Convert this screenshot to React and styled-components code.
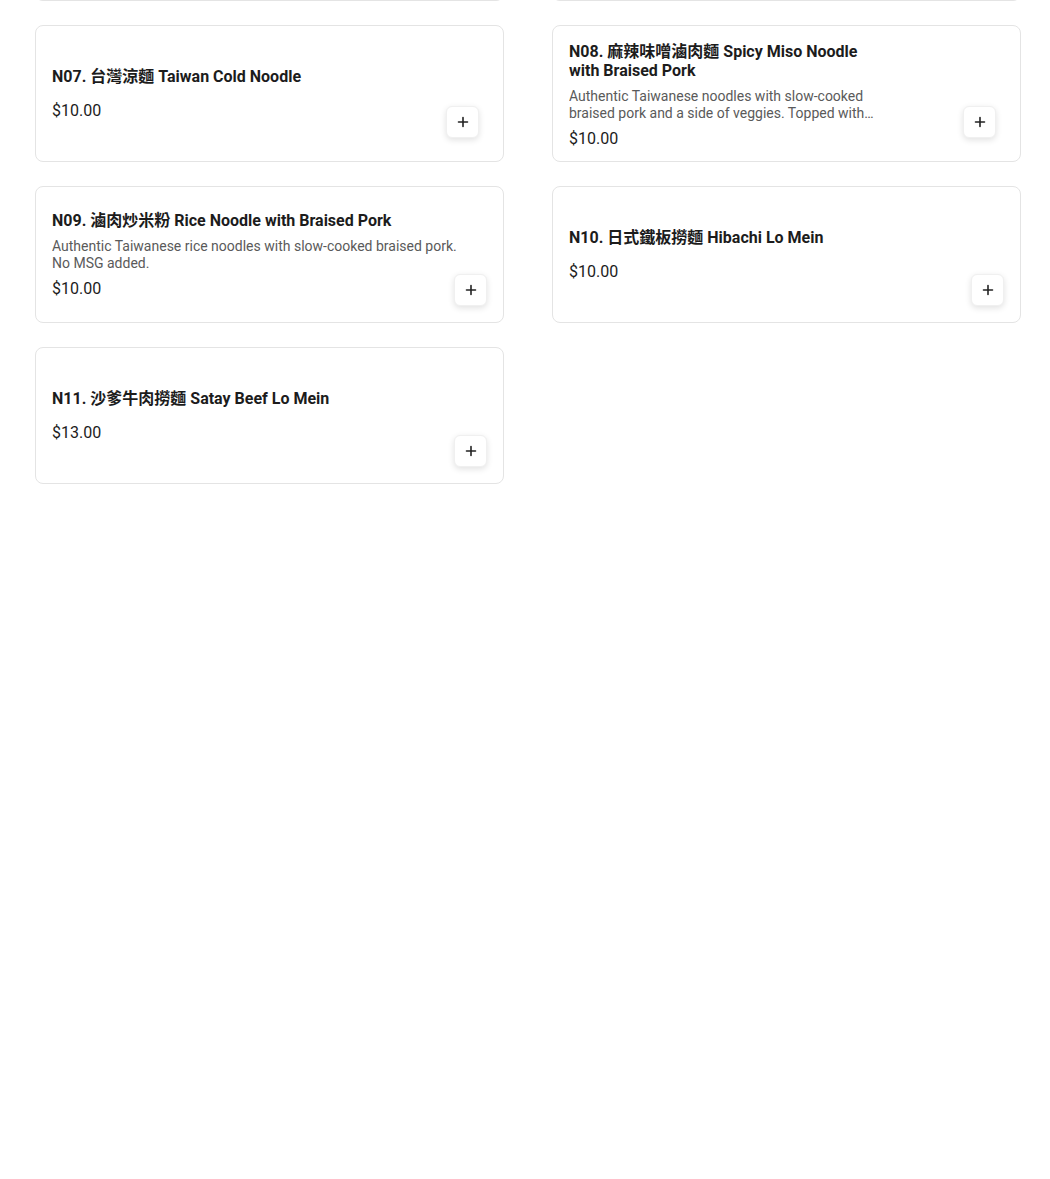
import React from 'react'
import styled, { createGlobalStyle } from 'styled-components'

const items = [
    { code: 'N07', zh: '台灣涼麵', en: 'Taiwan Cold Noodle', price: '$10.00', image: true },
    {
        code: 'N08',
        zh: '麻辣味噌滷肉麵',
        en: 'Spicy Miso Noodle with Braised Pork',
        desc: 'Authentic Taiwanese noodles with slow-cooked braised pork and a side of veggies. Topped with pickled mustard greens and scallions. No MSG added.',
        price: '$10.00',
        image: true,
    },
    {
        code: 'N09',
        zh: '滷肉炒米粉',
        en: 'Rice Noodle with Braised Pork',
        desc: 'Authentic Taiwanese rice noodles with slow-cooked braised pork. No MSG added.',
        price: '$10.00',
    },
    { code: 'N10', zh: '日式鐵板撈麵', en: 'Hibachi Lo Mein', price: '$10.00' },
    { code: 'N11', zh: '沙爹牛肉撈麵', en: 'Satay Beef Lo Mein', price: '$13.00' },
]

const PlusIcon = () => (
    <svg width="12" height="12" viewBox="0 0 12 12" fill="none">
        <path d="M6 1.5v9M1.5 6h9" stroke="#222" strokeWidth="1.6" strokeLinecap="round" />
    </svg>
)

function MenuCard({ item }) {
    return (
        <Card>
            <Info $image={item.image}>
                <Title>{item.code}. {item.zh} {item.en}</Title>
                {item.desc && <Desc>{item.desc}</Desc>}
                <Price>{item.price}</Price>
            </Info>
            {item.image && <Thumb />}
            <AddButton $inset={item.image} aria-label="Add">
                <PlusIcon />
            </AddButton>
        </Card>
    )
}

export default function App() {
    return (
        <>
            <GlobalStyle />
            <Page>
                <Grid>
                    {/* bottom edges of the row scrolled above */}
                    <CardTail />
                    <CardTail />
                    {items.map((item) => (
                        <MenuCard key={item.code} item={item} />
                    ))}
                </Grid>
            </Page>
        </>
    )
}

const GlobalStyle = createGlobalStyle`
    body {
        margin:0;
        background:#fff;
        font-family: Roboto, "Noto Sans CJK TC", "Liberation Sans", sans-serif;
        color:#1c1c1c;
    }
`;

const Page = styled.div`
    padding:0 29px 0 35px;
    overflow:hidden;
    min-height:1179px;
`;

const Grid = styled.div`
    display:grid;
    grid-template-columns:469px 469px;
    column-gap:48px;
    row-gap:24px;
    margin-top:-9px;
`;

const CardTail = styled.div`
    box-sizing:border-box;
    height:10px;
    border:1px solid #e4e4e4;
    border-top:none;
    border-radius:0 0 8px 8px;
`;

const Card = styled.div`
    position:relative;
    box-sizing:border-box;
    height:137px;
    padding:16px;
    display:flex;
    gap:18px;
    border:1px solid #e4e4e4;
    border-radius:8px;
    background:#fff;
`;

const Info = styled.div`
    flex:1;
    min-width:0;
    margin:auto 0;
    padding-right:${(p) => (p.$image ? '0' : '16px')};
    display:flex;
    flex-direction:column;
`;

const Title = styled.div`
    font-size:16px;
    font-weight:700;
    line-height:19px;
    color:#1c1c1c;
    margin-bottom:8px;
`;

const Desc = styled.div`
    font-size:14px;
    line-height:17px;
    color:#5a5a5a;
    display:-webkit-box;
    -webkit-line-clamp:2;
    -webkit-box-orient:vertical;
    overflow:hidden;
`;

const Price = styled.div`
    font-size:16px;
    line-height:20px;
    color:#1c1c1c;
    margin-top:7px;
`;

const Thumb = styled.div`
    flex:none;
    width:104px;
    height:103px;
    border-radius:6px;
`;

const AddButton = styled.button`
    position:absolute;
    right:${(p) => (p.$inset ? '24px' : '16px')};
    bottom:${(p) => (p.$inset ? '23px' : '16px')};
    width:33px;
    height:32px;
    padding:0;
    display:flex;
    align-items:center;
    justify-content:center;
    border:1px solid #f0f0f0;
    border-radius:6px;
    background:#fff;
    box-shadow:0 2px 6px rgba(0,0,0,0.12);
    cursor:pointer;
`;
